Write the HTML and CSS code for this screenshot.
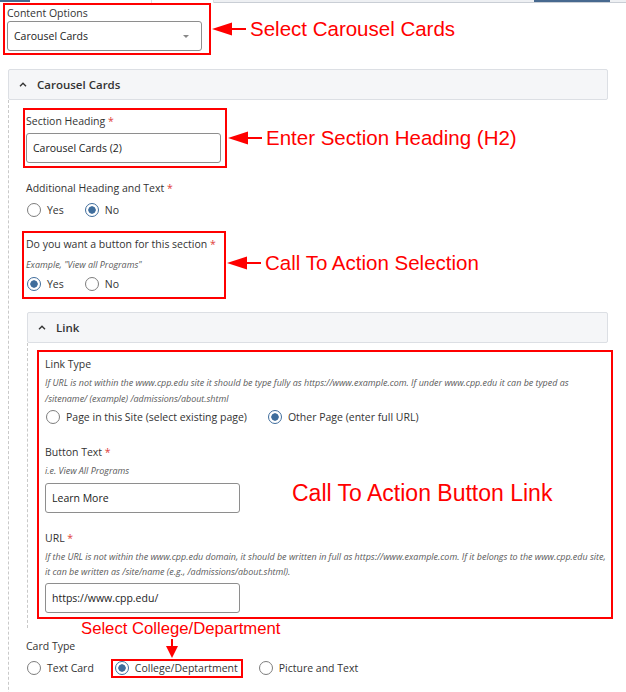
FILE: index.html
```html
<!DOCTYPE html>
<html lang="en">
  <head>
    <meta charset="utf-8" />
    <link rel="stylesheet" href="styles.css">
  </head>
  <body>
    <div class="topbar">
      <div class="tb-blue"></div>
      <div class="tb-tab"></div>
      <div class="tb-tab short"></div>
      <div class="tb-rest"><div class="tb-blue right"></div></div>
    </div>

    <main class="form">
      <div class="row">
        <div class="mark box-options">
          <div class="label">Content Options</div>
          <div class="select">Carousel Cards <span class="caret"></span></div>
        </div>
        <div class="note">
          <svg width="34" height="14" viewBox="0 0 34 14"><polygon points="0,7 20,0.5 20,13.5" fill="#f00"/><rect x="19" y="6" width="15" height="2" fill="#f00"/></svg>
          <span>Select Carousel Cards</span>
        </div>
      </div>

      <section class="panel">
        <div class="panel-head">
          <svg width="8" height="5" viewBox="0 0 8 5"><path d="M1 4.2 L4 1.2 L7 4.2" fill="none" stroke="#333" stroke-width="1.4"/></svg>
          <span>Carousel Cards</span>
        </div>
        <div class="panel-body">
          <div class="row">
            <div class="mark box-heading">
              <div class="label">Section Heading <span class="req">*</span></div>
              <div class="input">Carousel Cards (2)</div>
            </div>
            <div class="note">
              <svg width="34" height="14" viewBox="0 0 34 14"><polygon points="0,7 20,0.5 20,13.5" fill="#f00"/><rect x="19" y="6" width="15" height="2" fill="#f00"/></svg>
              <span>Enter Section Heading (H2)</span>
            </div>
          </div>

          <div class="group">
            <div class="label">Additional Heading and Text <span class="req">*</span></div>
            <div class="radios">
              <label class="opt"><input type="radio" name="extra" /> Yes</label>
              <label class="opt"><input type="radio" name="extra" checked /> No</label>
            </div>
          </div>

          <div class="row">
            <div class="mark box-button">
              <div class="label">Do you want a button for this section <span class="req">*</span></div>
              <div class="help">Example, "View all Programs"</div>
              <div class="radios">
                <label class="opt"><input type="radio" name="btn" checked /> Yes</label>
                <label class="opt"><input type="radio" name="btn" /> No</label>
              </div>
            </div>
            <div class="note lower">
              <svg width="34" height="14" viewBox="0 0 34 14"><polygon points="0,7 20,0.5 20,13.5" fill="#f00"/><rect x="19" y="6" width="15" height="2" fill="#f00"/></svg>
              <span>Call To Action Selection</span>
            </div>
          </div>

          <section class="panel sub">
            <div class="panel-head">
              <svg width="8" height="5" viewBox="0 0 8 5"><path d="M1 4.2 L4 1.2 L7 4.2" fill="none" stroke="#333" stroke-width="1.4"/></svg>
              <span>Link</span>
            </div>
            <div class="panel-body">
              <div class="mark box-link">
                <div class="field">
                  <div class="label">Link Type</div>
                  <div class="help">If URL is not within the www.cpp.edu site it should be type fully as https://www.example.com. If under www.cpp.edu it can be typed as<br>/sitename/ (example) /admissions/about.shtml</div>
                  <div class="radios">
                    <label class="opt"><input type="radio" name="ltype" /> Page in this Site (select existing page)</label>
                    <label class="opt"><input type="radio" name="ltype" checked /> Other Page (enter full URL)</label>
                  </div>
                </div>
                <div class="field">
                  <div class="label">Button Text <span class="req">*</span></div>
                  <div class="help">i.e. View All Programs</div>
                  <div class="input">Learn More</div>
                </div>
                <div class="field">
                  <div class="label">URL <span class="req">*</span></div>
                  <div class="help tight">If the URL is not within the www.cpp.edu domain, it should be written in full as https://www.example.com. If it belongs to the www.cpp.edu site,<br>it can be written as /site/name (e.g., /admissions/about.shtml).</div>
                  <div class="input">https://www.cpp.edu/</div>
                </div>
                <div class="note-inside">Call To Action Button Link</div>
              </div>
            </div>
          </section>

          <div class="group card-type">
            <div class="note-small">Select College/Department</div>
            <svg class="down-arrow" width="12" height="19" viewBox="0 0 12 19"><rect x="5" y="0" width="2" height="8" fill="#f00"/><polygon points="0,7 12,7 6,19" fill="#f00"/></svg>
            <div class="label">Card Type</div>
            <div class="radios">
              <label class="opt"><input type="radio" name="ctype" /> Text Card</label>
              <label class="opt picked"><input type="radio" name="ctype" checked /> College/Deptartment</label>
              <label class="opt"><input type="radio" name="ctype" /> Picture and Text</label>
            </div>
          </div>
        </div>
      </section>
    </main>
  </body>
</html>
```

FILE: styles.css
```css
* {
  box-sizing: border-box;
}

body {
  margin: 0;
  background: #fff;
  color: #333;
  font-family: "Open Sans", sans-serif;
  font-size: 10.5px;
  overflow: hidden;
}

/* strip of the toolbar cut off at the top */
.topbar {
  display: flex;
  height: 3px;
}

.tb-blue {
  width: 30px;
  height: 2px;
  background: #47698f;
}

.tb-blue.right {
  width: 76px;
  margin-left: 320px;
}

.tb-tab {
  width: 122px;
  border-right: 1px solid #dde0e4;
}

.tb-tab.short {
  width: 62px;
}

.tb-rest {
  flex: 1;
  background: #eef0f3;
  border-bottom: 1px solid #c9ced5;
}

.form {
  padding-left: 3px;
}

.row {
  display: flex;
  align-items: center;
}

.mark {
  border: 2px solid #f00;
}

.label {
  line-height: 18px;
  white-space: nowrap;
}

.req {
  color: #e0403a;
}

.help {
  font-style: italic;
  font-size: 8.95px;
  line-height: 16px;
  color: #5a5a5a;
  white-space: nowrap;
}

.help.tight {
  line-height: 15px;
}

.select,
.input {
  position: relative;
  display: flex;
  align-items: center;
  height: 30px;
  padding-left: 6px;
  border: 1px solid #8e8e8e;
  border-radius: 3px;
  background: #fff;
  color: #222;
}

.caret {
  position: absolute;
  right: 12px;
  top: 13px;
  border-left: 3px solid transparent;
  border-right: 3px solid transparent;
  border-top: 3px solid #888;
}

.box-options {
  width: 208px;
  padding: 0 7px 2px 2px;
}

.box-options .label {
  line-height: 16px;
}

.note {
  display: flex;
  align-items: center;
  color: #f00;
  font-family: "Liberation Sans", Arial, sans-serif;
  font-size: 20.5px;
  white-space: nowrap;
}

.note.lower {
  margin-top: 5px;
}

.note svg {
  flex: none;
  margin: 0 4px 0 1px;
}

.panel {
  margin: 14px 18px 0 5px;
}

.panel-head {
  display: flex;
  align-items: center;
  gap: 10px;
  height: 31px;
  padding-left: 10px;
  border: 1px solid #dcdfe4;
  border-radius: 2px;
  background: #f5f6f8;
  font-size: 11.5px;
  font-weight: 600;
  color: #333;
}

.panel-body {
  border-left: 1px dashed #c9c9c9;
  padding: 8px 0 60px 14px;
}

.box-heading {
  width: 204px;
  padding: 2px 4px 3px 1px;
}

.box-heading .input {
  margin-top: 3px;
}

.group {
  border: 2px solid transparent;
  padding-left: 1px;
  margin-top: 9px;
}

.group .radios {
  margin-top: 3px;
}

.box-button {
  width: 204px;
  margin: 9px 0 0 -1px;
  padding: 2px 4px 3px 2px;
}

.box-button .help {
  margin-top: 4px;
}

.box-button .radios {
  margin-top: 1px;
}

.radios {
  display: flex;
  gap: 20px;
  height: 20px;
  align-items: center;
}

.opt {
  position: relative;
  display: flex;
  align-items: center;
  gap: 6px;
  white-space: nowrap;
}

.opt input {
  appearance: none;
  -webkit-appearance: none;
  width: 14px;
  height: 14px;
  margin: 0 0 0 1px;
  border: 1.5px solid #7d7d7d;
  border-radius: 50%;
  background: #fff;
}

.opt input:checked {
  border-color: #3f6d9c;
  background: radial-gradient(circle, #3f6d9c 0 3.4px, #fff 4px);
}

.panel.sub {
  margin: 13px 0 0 4px;
}

.panel.sub .panel-body {
  padding: 7px 0 9px 9px;
}

.box-link {
  position: relative;
  margin-right: -5px;
  padding: 3px 6px 4px 6px;
}

.field + .field {
  margin-top: 16px;
}

.field .help {
  margin-top: 2px;
}

.field .input {
  width: 195px;
  margin-top: 4px;
}

.note-inside {
  position: absolute;
  left: 253px;
  top: 127px;
  color: #f00;
  font-family: "Liberation Sans", Arial, sans-serif;
  font-size: 23px;
  line-height: 28px;
  white-space: nowrap;
}

.card-type {
  position: relative;
  margin-top: 7px;
}

.note-small {
  position: absolute;
  left: 56px;
  top: -18px;
  color: #f00;
  font-family: "Liberation Sans", Arial, sans-serif;
  font-size: 16.7px;
  line-height: 20px;
  white-space: nowrap;
}

.down-arrow {
  position: absolute;
  left: 141px;
  top: 2px;
}

.opt.picked::after {
  content: "";
  position: absolute;
  top: -2px;
  right: -5px;
  bottom: -3px;
  left: -3px;
  border: 2px solid #f00;
}
```
